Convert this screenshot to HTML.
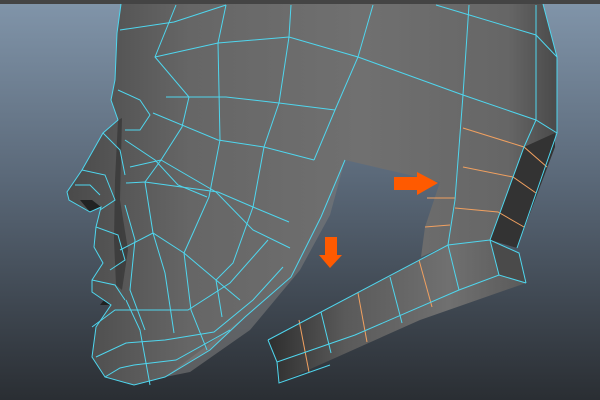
<!DOCTYPE html>
<html><head><style>
html,body{margin:0;padding:0;width:600px;height:400px;overflow:hidden;background:#000}
svg{display:block}
</style></head><body>
<svg width="600" height="400" viewBox="0 0 600 400" xmlns="http://www.w3.org/2000/svg">
<defs>
<linearGradient id="bg" x1="0" y1="0" x2="0" y2="1">
<stop offset="0" stop-color="#8195aa"/><stop offset="0.45" stop-color="#5a6878"/><stop offset="1" stop-color="#2a2e33"/>
</linearGradient>
<linearGradient id="head" x1="0" y1="0" x2="1" y2="0">
<stop offset="0" stop-color="#4a4a4a"/><stop offset="0.25" stop-color="#666"/><stop offset="0.6" stop-color="#707070"/><stop offset="0.9" stop-color="#666"/><stop offset="1" stop-color="#4a4a4a"/>
</linearGradient>
<linearGradient id="strap" x1="0" y1="0" x2="1" y2="0">
<stop offset="0" stop-color="#2e2e2e"/><stop offset="0.3" stop-color="#5a5a5a"/><stop offset="0.7" stop-color="#707070"/><stop offset="1" stop-color="#5a5a5a"/>
</linearGradient>
</defs>
<rect width="600" height="400" fill="url(#bg)"/>
<rect width="600" height="4" fill="#444"/>
<path d="M121,4 L117,33 L115,80 L111,100 L118,120 L103,133 L82,170 L67,192 L69,200 L90,212 L101,207 L96,227 L94,247 L103,263 L92,280 L92,292 L111,305 L96,327 L92,357 L105,377 L134,385 L165,377 L210,350 L245,317 L291,277 L321,217 L345,160 L440,182 L425,227 L421,257 L448,245 L490,240 L517,248 L557,133 L557,57 L543,4 Z" fill="url(#head)"/>
<path d="M345,160 L321,217 L291,277 L245,317 L165,377 L190,372 L250,330 L300,270 L330,215 Z" fill="#7a7a7a" opacity="0.6"/>
<path d="M524,147 L555,133 L555,147 L517,248 L490,240 Z" fill="#333"/>
<path d="M118,120 L122,118 L120,200 L128,250 L122,290 L116,285 L114,240 L115,180 Z" fill="#2e2e2e" opacity="0.6"/>
<path d="M80,200 L90,212 L101,207 L92,200 Z M100,305 L111,305 L104,300 Z" fill="#222"/>
<path d="M268,340 L448,245 L490,240 L519,253 L526,283 L420,320 L279,383 L277,362 Z" fill="url(#strap)"/>
<path d="M519,253 L526,283 L499,275 L490,240 Z" fill="#4a4a4a"/>
<g fill="none" stroke="#f0a060" stroke-width="1">
<polyline points="463,128 524,147 547,167"/>
<polyline points="463,167 513,177 536,193"/>
<polyline points="455,208 498,212 524,227"/>
<polyline points="427,198 455,198"/>
<polyline points="425,227 450,225"/>
<line x1="358" y1="293" x2="367" y2="342"/>
<line x1="419" y1="260" x2="432" y2="307"/>
<line x1="299" y1="320" x2="309" y2="372"/>
</g>
<g fill="none" stroke="#4fd6ee" stroke-width="1">
<polyline points="121,4 117,33 115,80 111,100 118,120 103,133 82,170 67,192 69,200 90,212 101,207 96,227 94,247 103,263 92,280 92,292 111,305 96,327 92,357 105,377 134,385 165,377 210,350 245,317 291,277 321,217 345,160"/>
<polyline points="543,4 557,57 557,133 517,248"/>
<polyline points="120,30 174,22 226,5"/>
<polyline points="155,57 218,43 289,37 358,57 463,95 536,120 557,133"/>
<polyline points="166,97 226,97 279,103 335,110"/>
<polyline points="153,113 218,140 264,147 314,160"/>
<polyline points="126,183 145,182 218,192 253,207 289,222"/>
<polyline points="176,5 155,57 189,97 182,127 161,160 145,182 153,233 165,273 174,333"/>
<polyline points="226,5 218,43 220,140 209,197 193,233 184,253 191,310 207,350"/>
<polyline points="291,5 289,37 279,103 264,147 253,207 233,263 216,280 222,317"/>
<polyline points="373,5 358,57 335,110 314,160"/>
<polyline points="469,5 463,95 455,200 448,245"/>
<polyline points="536,5 536,120 524,147 490,240"/>
<polyline points="436,5 536,35 557,57"/>
<polyline points="96,357 126,343 165,340 214,332 253,300 283,267"/>
<polyline points="92,327 115,310 153,310 188,310 230,283 268,240"/>
<polyline points="105,377 120,368 134,365 176,360 230,330"/>
<polyline points="130,167 161,160 216,192 253,230 290,248"/>
<polyline points="125,140 155,160 178,185 207,197"/>
<polyline points="120,250 153,233 184,253 216,280 240,300"/>
<polyline points="118,90 140,100 150,115 140,130 125,130"/>
<polyline points="82,170 105,175 115,200 100,210"/>
<polyline points="75,185 90,185 100,195"/>
<polyline points="96,227 118,235 125,260 110,270"/>
<polyline points="92,280 115,285 125,300"/>
<polyline points="103,133 120,150 125,175"/>
<polyline points="126,300 140,330 150,385"/>
<polyline points="125,205 135,240 130,290 145,330"/>
<polyline points="268,340 448,245 490,240 519,253 526,283"/>
<polyline points="277,362 355,335 459,290 499,275 526,283"/>
<polyline points="268,340 277,362 279,383 330,365"/>
<line x1="321" y1="312" x2="331" y2="353"/>
<line x1="390" y1="277" x2="402" y2="323"/>
<line x1="448" y1="245" x2="459" y2="290"/>
<line x1="490" y1="240" x2="499" y2="275"/>
</g>
<path d="M394,177 L417,177 L417,172 L438,183 L417,195 L417,190 L394,190 Z" fill="#ff5a00"/>
<path d="M325,237 L337,237 L337,255 L342,255 L330,268 L319,255 L325,255 Z" fill="#ff5a00"/>
</svg>
</body></html>
